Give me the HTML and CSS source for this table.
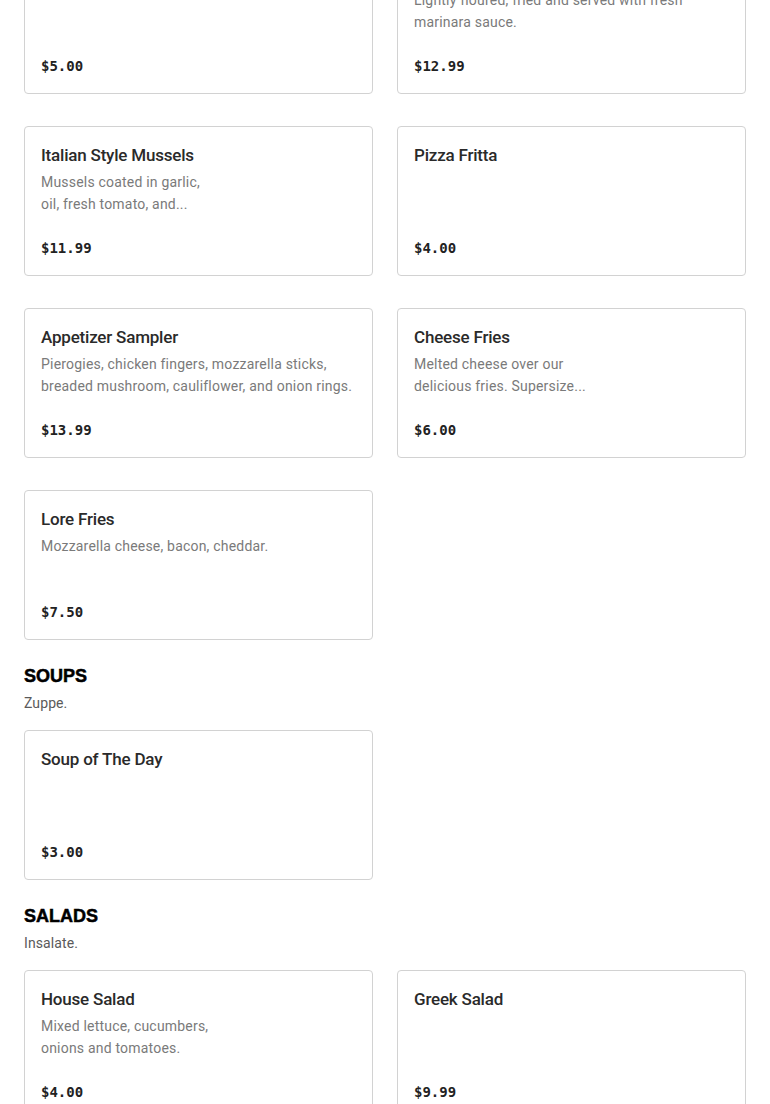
FILE: index.html
```html
<!DOCTYPE html>
<html lang="en">
<head>
<meta charset="utf-8">
<title>Menu</title>
<link rel="stylesheet" href="styles.css">
</head>
<body>
<main class="menu">
  <section class="section section-first">
    <div class="grid">
      <article class="card">
        <h3 class="card-title">Garlic Bread</h3>
        <p class="card-price">$5.00</p>
      </article>
      <article class="card">
        <h3 class="card-title">Fried Calamari</h3>
        <p class="card-desc">Lightly floured, fried and served with fresh<br>marinara sauce.</p>
        <p class="card-price">$12.99</p>
      </article>
      <article class="card">
        <h3 class="card-title">Italian Style Mussels</h3>
        <p class="card-desc">Mussels coated in garlic,<br>oil, fresh tomato, and...</p>
        <p class="card-price">$11.99</p>
      </article>
      <article class="card">
        <h3 class="card-title">Pizza Fritta</h3>
        <p class="card-price">$4.00</p>
      </article>
      <article class="card">
        <h3 class="card-title">Appetizer Sampler</h3>
        <p class="card-desc">Pierogies, chicken fingers, mozzarella sticks,<br>breaded mushroom, cauliflower, and onion rings.</p>
        <p class="card-price">$13.99</p>
      </article>
      <article class="card">
        <h3 class="card-title">Cheese Fries</h3>
        <p class="card-desc">Melted cheese over our<br>delicious fries. Supersize...</p>
        <p class="card-price">$6.00</p>
      </article>
      <article class="card">
        <h3 class="card-title">Lore Fries</h3>
        <p class="card-desc">Mozzarella cheese, bacon, cheddar.</p>
        <p class="card-price">$7.50</p>
      </article>
    </div>
  </section>

  <section class="section">
    <h2 class="section-title">SOUPS</h2>
    <p class="section-sub">Zuppe.</p>
    <div class="grid">
      <article class="card">
        <h3 class="card-title">Soup of The Day</h3>
        <p class="card-price">$3.00</p>
      </article>
    </div>
  </section>

  <section class="section">
    <h2 class="section-title">SALADS</h2>
    <p class="section-sub">Insalate.</p>
    <div class="grid">
      <article class="card">
        <h3 class="card-title">House Salad</h3>
        <p class="card-desc">Mixed lettuce, cucumbers,<br>onions and tomatoes.</p>
        <p class="card-price">$4.00</p>
      </article>
      <article class="card">
        <h3 class="card-title">Greek Salad</h3>
        <p class="card-price">$9.99</p>
      </article>
    </div>
  </section>
</main>
</body>
</html>
```

FILE: styles.css
```css
* {
  box-sizing: border-box;
}

html, body {
  margin: 0;
  padding: 0;
  background: #ffffff;
}

body {
  font-family: Roboto, "Liberation Sans", Arial, sans-serif;
  color: #222222;
}

.menu {
  padding: 0 24px 40px;
}

.section-first {
  margin-top: -56px;
}

.section + .section {
  margin-top: 23px;
}

.section-title {
  margin: 0;
  font-family: "Liberation Sans", Arial, sans-serif;
  font-weight: 700;
  font-size: 18px;
  line-height: 26px;
  color: #000000;
  -webkit-text-stroke: 0.5px #000000;
}

.section-sub {
  margin: 4px 0 17px;
  font-size: 14px;
  line-height: 20px;
  color: #5a5a5a;
  letter-spacing: 0.1px;
}

.grid {
  display: grid;
  grid-template-columns: 1fr 1fr;
  column-gap: 24px;
  row-gap: 32px;
}

.card {
  height: 150px;
  border: 1px solid #d2d2d2;
  border-radius: 4px;
  padding: 16px 16px 18px;
  display: flex;
  flex-direction: column;
  background: #ffffff;
}

.card-title {
  margin: 0;
  font-size: 17px;
  line-height: 24px;
  font-weight: 500;
  color: #2a2a2a;
  letter-spacing: -0.2px;
}

.card-desc {
  margin: 4px 0 0;
  font-size: 14px;
  line-height: 22px;
  color: #7a7a7a;
  letter-spacing: 0.2px;
}

.card-price {
  margin: auto 0 0;
  font-family: "DejaVu Sans Mono", "Liberation Mono", monospace;
  font-weight: 700;
  font-size: 14px;
  line-height: 18px;
  color: #222222;
}
```
